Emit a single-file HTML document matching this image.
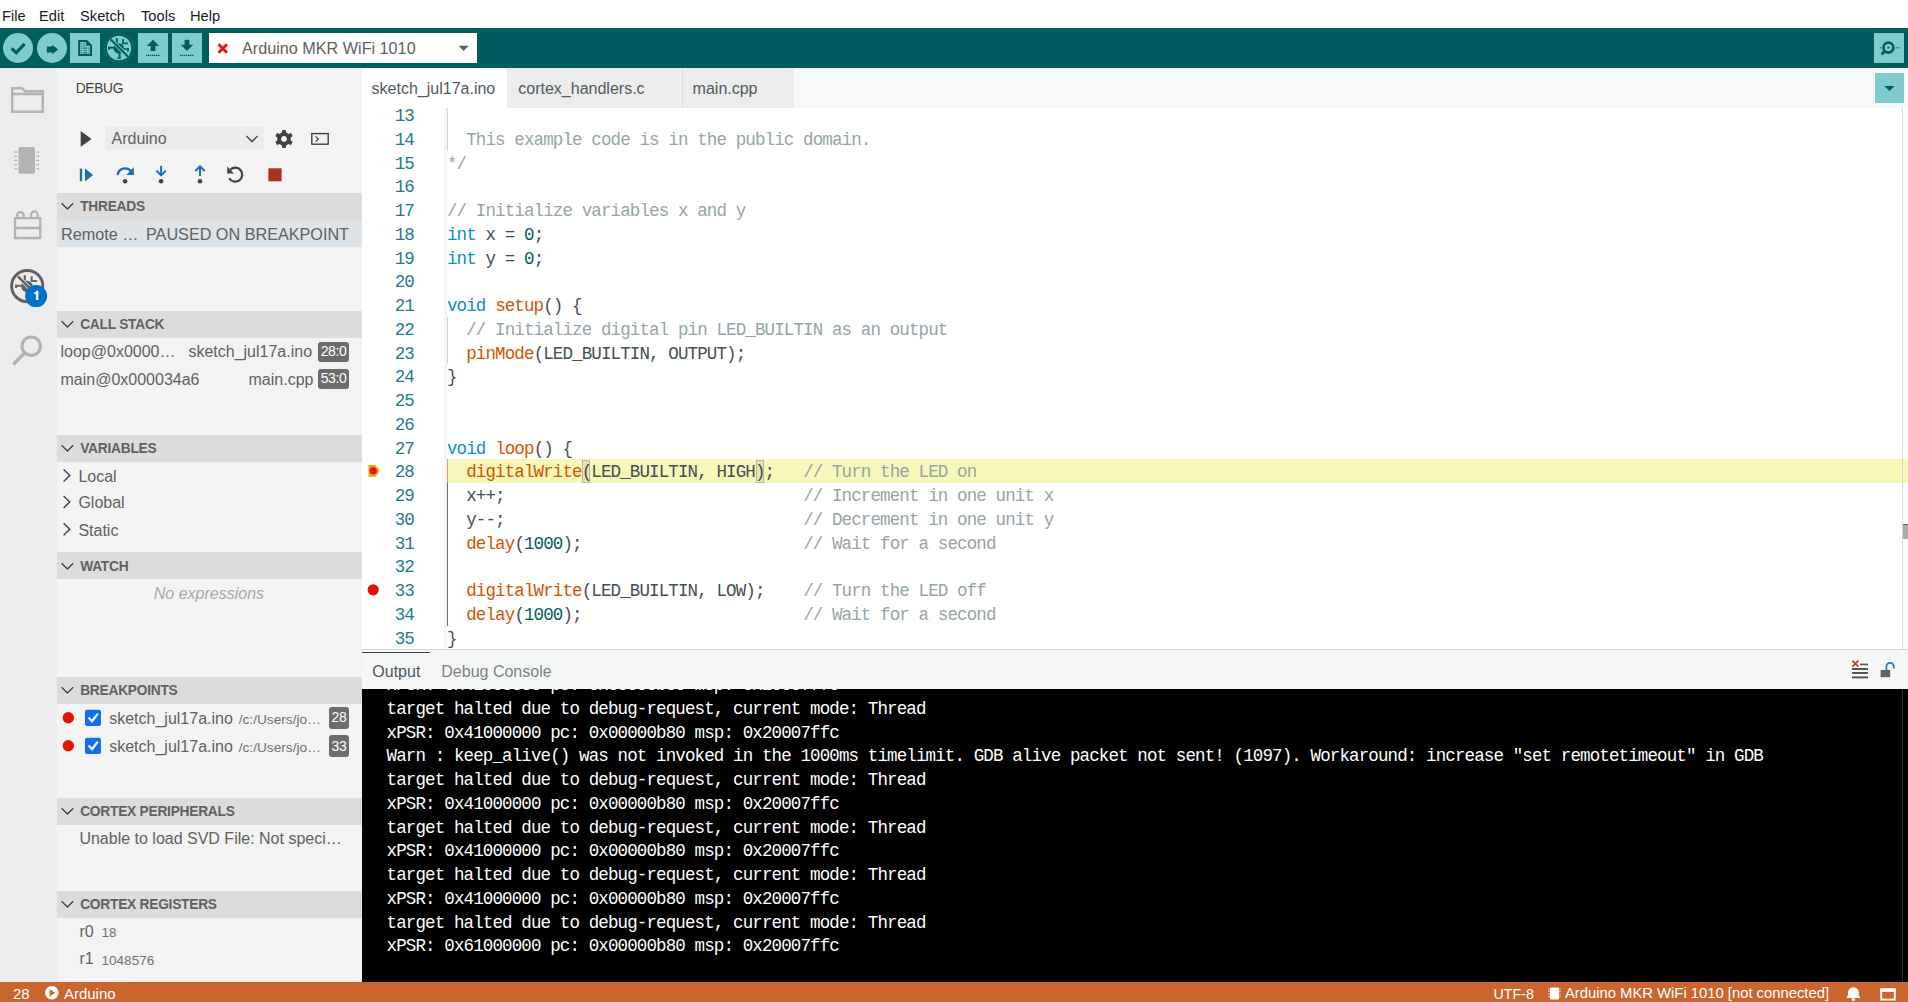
<!DOCTYPE html>
<html><head><meta charset="utf-8">
<style>
*{box-sizing:border-box;margin:0;padding:0}
html,body{width:1908px;height:1002px;overflow:hidden;background:#fff;font-family:"Liberation Sans",sans-serif;}
.a{position:absolute;white-space:pre}
#menu{left:0;top:0;width:1908px;height:28px;background:#fff;font-size:14.7px;color:#1a1a1a}
#toolbar{left:0;top:28px;width:1908px;height:40px;background:#005c5f}
.btn{position:absolute;top:5px;width:30px;height:30px;background:#7fcbcd}
.circ{border-radius:50%}
#act{left:0;top:68px;width:57px;height:914px;background:#ececec}
#side{left:57px;top:68px;width:305px;height:914px;background:#f3f3f3;color:#616161}
.hdr{position:absolute;left:0;width:305px;height:26.6px;background:#dcdcdc;font-weight:bold;font-size:13.75px;letter-spacing:-0.25px;color:#616161}
.hdr span{position:absolute;left:23.2px;top:6.2px}
.badge{position:absolute;background:#6b6d6d;color:#fff;border-radius:3px;font-size:14px;letter-spacing:-0.4px;text-align:center}
.hdr svg{position:absolute;left:4px;top:9px}
#tabs{left:362px;top:68px;width:1546px;height:40px;background:#f7f9f9;font-size:16px;color:#4e5b61}
#code{left:362px;top:108px;width:1546px;height:541px;background:#fff;overflow:hidden}
.ln{position:absolute;left:0;width:52px;line-height:23.75px;text-align:right;font-family:"Liberation Mono",monospace;font-size:17.5px;letter-spacing:-0.877px;color:#237893}
.cl{position:absolute;left:85px;line-height:23.75px;white-space:pre;font-family:"Liberation Mono",monospace;font-size:17.5px;letter-spacing:-0.877px;color:#434f54}
.k{color:#0b8dc6}.n{color:#005c5f}.f{color:#d35400}.c{color:#95a5a6}
#panel{left:362px;top:649px;width:1546px;height:40px;background:#f5f7f7;border-top:1px solid #d4d4d4}
#out{left:362px;top:689px;width:1546px;height:293px;background:#000;overflow:hidden}
.ol{position:absolute;left:24.6px;line-height:23.75px;white-space:pre;font-family:"Liberation Mono",monospace;font-size:17.5px;letter-spacing:-0.877px;color:#fff}
#status{left:0;top:982px;width:1908px;height:20px;background:#c9652f;color:#fff;font-size:15px;overflow:hidden}
</style></head>
<body>
<div id="menu" class="a">
 <span class="a" style="left:2px;top:8px">File</span>
 <span class="a" style="left:39px;top:8px">Edit</span>
 <span class="a" style="left:80px;top:8px">Sketch</span>
 <span class="a" style="left:141px;top:8px">Tools</span>
 <span class="a" style="left:190px;top:8px">Help</span>
</div>
<div id="toolbar" class="a">
 <svg class="a" style="left:0;top:0" width="480" height="40" viewBox="0 28 480 40">
  <circle cx="18" cy="48" r="15" fill="#7fcbcd"/>
  <path d="M11.6 48.3 L16.2 52.8 L24.6 43.8" fill="none" stroke="#005c5f" stroke-width="3.2"/>
  <circle cx="52" cy="48" r="15" fill="#7fcbcd"/>
  <path d="M46.8 46.6 H52.2 V44.8 L58.2 49.5 L52.2 54.2 V52.4 H46.8 Z" fill="#005c5f"/>
  <rect x="70" y="33" width="30" height="30" fill="#7fcbcd"/>
  <path d="M79.2 41 H86.6 L91 45.4 V55 H79.2 Z" fill="none" stroke="#005c5f" stroke-width="2"/>
  <path d="M86.2 40 L92 45.8 H86.2 Z" fill="#005c5f"/>
  <g fill="#2c7f93"><rect x="81.2" y="43" width="1" height="1.2"/><rect x="83.2" y="43" width="2" height="1"/><rect x="81.2" y="45.2" width="1" height="1.2"/><rect x="83.2" y="45.2" width="2" height="1"/><rect x="81.2" y="47.4" width="1" height="1.6"/><rect x="83.2" y="47.4" width="4" height="1.6"/><rect x="88.2" y="47.4" width="1" height="1.6"/><rect x="81.2" y="50" width="1" height="1"/><rect x="83.2" y="50" width="4" height="1"/><rect x="88.2" y="50" width="1" height="1"/><rect x="81.2" y="52" width="1" height="1.6"/><rect x="83.2" y="52" width="4" height="1.6"/><rect x="88.2" y="52" width="1" height="1.6"/></g>
  <circle cx="119" cy="48" r="14.5" fill="none" stroke="#2b7a85" stroke-width="0.8" stroke-dasharray="2 1.6"/>
  <circle cx="119" cy="48" r="12.2" fill="#7fcbcd"/>
  <g fill="#005c5f">
   <rect x="115.8" y="38.2" width="2" height="5"/>
   <rect x="122.2" y="39" width="1.8" height="4.4"/>
   <rect x="122.2" y="42.6" width="5.8" height="1.6"/>
   <rect x="108" y="46.8" width="6.2" height="1.8"/>
   <rect x="108" y="46.8" width="1.8" height="3"/>
   <rect x="118.6" y="53" width="2" height="5.8"/>
   <rect x="117.2" y="57.4" width="3.4" height="1.4"/>
   <rect x="123.4" y="48.2" width="5.4" height="1.6"/>
   <rect x="127" y="48.2" width="1.8" height="3.4"/>
   <circle cx="118.8" cy="48.4" r="5.2"/>
  </g>
  <path d="M110.5 39.2 L128.2 56.8" stroke="#7fcbcd" stroke-width="4"/>
  <path d="M110.5 39.2 L128.2 56.8" stroke="#005c5f" stroke-width="2.2"/>
  <rect x="138" y="33" width="30" height="30" fill="#7fcbcd"/>
  <path d="M153 39.7 L159.2 46 H155.4 V51 H150.6 V46 H146.8 Z" fill="#005c5f"/>
  <path d="M146 55.4 H160" stroke="#005c5f" stroke-width="1.2" stroke-dasharray="1.4 0.6"/>
  <rect x="172" y="33" width="30" height="30" fill="#7fcbcd"/>
  <path d="M184.6 39.7 H189.4 V44.7 H193.2 L187 51 L180.8 44.7 H184.6 Z" fill="#005c5f"/>
  <path d="M180 55.4 H194" stroke="#005c5f" stroke-width="1.2" stroke-dasharray="1.4 0.6"/>
  <rect x="209" y="33" width="268" height="30" fill="#fff"/>
  <path d="M218.6 44.2 L227 52.8 M227 44.2 L218.6 52.8" stroke="#e8100c" stroke-width="2.8"/>
  <path d="M458.6 45.8 H468.6 L463.6 51 Z" fill="#616161"/>
 </svg>
 <span class="a" style="left:242px;top:11.3px;font-size:16.2px;color:#616161">Arduino MKR WiFi 1010</span>
 <svg class="a" style="left:1874px;top:5px" width="30" height="30" viewBox="1874 33 30 30">
  <rect x="1874" y="33" width="30" height="30" fill="#7fcbcd"/>
  <circle cx="1888.4" cy="47.6" r="5" fill="none" stroke="#005c5f" stroke-width="2.6"/>
  <rect x="1887.4" y="46.6" width="2" height="2" fill="#005c5f"/>
  <path d="M1884.6 51.2 L1881.6 54.4" stroke="#005c5f" stroke-width="2.8"/>
  <g fill="#005c5f"><rect x="1879.8" y="47" width="1" height="1.4"/><rect x="1895.8" y="47" width="1" height="1.4"/><rect x="1898.2" y="47" width="1" height="1.4"/></g>
 </svg>
</div>
<div id="act" class="a">
 <svg class="a" style="left:0;top:0" width="57" height="320" viewBox="0 68 57 320">
  <path d="M12.2 111.8 V88.2 H22 L25 91.2 H42.8 V111.8 Z M12.2 94 H42.8" fill="none" stroke="#b3b3b3" stroke-width="2.4"/>
  <rect x="18.5" y="147.1" width="16.5" height="26.6" rx="1.6" fill="#b3b3b3"/>
  <g fill="#b3b3b3"><rect x="14.3" y="151.4" width="3" height="1.3"/><rect x="14.3" y="155.6" width="3" height="1.3"/><rect x="14.3" y="159.8" width="3" height="1.3"/><rect x="14.3" y="164" width="3" height="1.3"/><rect x="14.3" y="168.2" width="3" height="1.3"/>
  <rect x="36.2" y="151.4" width="3" height="1.3"/><rect x="36.2" y="155.6" width="3" height="1.3"/><rect x="36.2" y="159.8" width="3" height="1.3"/><rect x="36.2" y="164" width="3" height="1.3"/><rect x="36.2" y="168.2" width="3" height="1.3"/></g>
  <path d="M15 238 V218.1 H40.2 V238 Z M15 228 H40.2" fill="none" stroke="#b3b3b3" stroke-width="2.3"/>
  <path d="M17.3 218 V214.6 A3.3 3.3 0 0 1 23.7 214.6 V218 M31.1 218 V214.6 A3.3 3.3 0 0 1 37.7 214.6 V218" fill="none" stroke="#b3b3b3" stroke-width="2.2"/>
  <circle cx="27.2" cy="286.1" r="15.6" fill="none" stroke="#616161" stroke-width="2.9"/>
  <g transform="translate(27.2 286.1) scale(1.1) translate(-119 -48)">
  <g fill="#616161">
   <rect x="115.8" y="38.2" width="2" height="5"/>
   <rect x="122.2" y="39" width="1.8" height="4.4"/>
   <rect x="122.2" y="42.6" width="5.8" height="1.6"/>
   <rect x="108" y="46.8" width="6.2" height="1.8"/>
   <rect x="108" y="46.8" width="1.8" height="3"/>
   <rect x="118.6" y="53" width="2" height="5.8"/>
   <rect x="123.4" y="48.2" width="5.4" height="1.6"/>
   <rect x="127" y="48.2" width="1.8" height="3.4"/>
   <circle cx="118.8" cy="48.4" r="5.2"/>
  </g>
  <path d="M110.5 39.2 L128.2 56.8" stroke="#ececec" stroke-width="3.6"/>
  <path d="M110.5 39.2 L128.2 56.8" stroke="#616161" stroke-width="2.2"/>
  </g>
  <circle cx="36.1" cy="296.1" r="11" fill="#0070c9"/>
  <path d="M33.6 293.4 L37 290.8 H38.4 V300 H35.9 V294.2 Z" fill="#fff"/>
  <circle cx="31.2" cy="346.2" r="9.2" fill="none" stroke="#b3b3b3" stroke-width="3.1"/>
  <path d="M24.6 353 L14.4 363.2" stroke="#b3b3b3" stroke-width="3.6" stroke-linecap="round"/>
 </svg>
</div>
<div id="side" class="a">
 <span class="a" style="left:18.7px;top:13.3px;font-size:13.75px;letter-spacing:-0.3px;color:#424242">DEBUG</span>
 <svg class="a" style="left:0;top:0" width="305" height="130" viewBox="57 68 305 130">
  <path d="M80.7 131.1 L91.6 139 L80.7 146.8 Z" fill="#424242"/>
  <rect x="105" y="127" width="158.7" height="22.8" fill="#ebebeb"/>
  <path d="M246.4 136 L252 141.6 L257.6 136" fill="none" stroke="#555" stroke-width="1.6"/>
  <g transform="translate(284 139)">
   <path d="M-1.6 -9 h3.2 l0.6 2.6 a6.8 6.8 0 0 1 2.2 1.3 l2.6 -0.8 l1.6 2.8 l-2 1.8 a6.8 6.8 0 0 1 0 2.6 l2 1.8 l-1.6 2.8 l-2.6 -0.8 a6.8 6.8 0 0 1 -2.2 1.3 l-0.6 2.6 h-3.2 l-0.6 -2.6 a6.8 6.8 0 0 1 -2.2 -1.3 l-2.6 0.8 l-1.6 -2.8 l2 -1.8 a6.8 6.8 0 0 1 0 -2.6 l-2 -1.8 l1.6 -2.8 l2.6 0.8 a6.8 6.8 0 0 1 2.2 -1.3 z M0 -2.9 a2.9 2.9 0 1 0 0.01 0 z" fill="#424242" fill-rule="evenodd"/>
  </g>
  <rect x="311.8" y="133.6" width="16.4" height="10.6" fill="none" stroke="#424242" stroke-width="1.4"/>
  <path d="M315.6 136.4 L318.4 139 L315.6 141.6" fill="none" stroke="#424242" stroke-width="1.2"/>
  <rect x="79.8" y="168.6" width="2.3" height="12.7" fill="#1c6cb7"/>
  <path d="M85 168.6 L93.1 175 L85 181.4 Z" fill="#1c6cb7"/>
  <path d="M117.6 175 A7.6 7.6 0 0 1 131.2 171.4" fill="none" stroke="#1c6cb7" stroke-width="2.3"/>
  <path d="M133.9 167.1 V174.9 H126.2 Z" fill="#1c6cb7"/>
  <circle cx="125.1" cy="181.3" r="2.3" fill="#424242"/>
  <path d="M161.1 165.8 V175" stroke="#1c6cb7" stroke-width="2"/>
  <path d="M156.4 170.6 L161.1 175.4 L165.8 170.6" fill="none" stroke="#1c6cb7" stroke-width="2"/>
  <circle cx="161.1" cy="181.3" r="2.3" fill="#424242"/>
  <path d="M200 166.4 V176" stroke="#1c6cb7" stroke-width="2"/>
  <path d="M195.3 171 L200 166.3 L204.7 171" fill="none" stroke="#1c6cb7" stroke-width="2"/>
  <circle cx="200" cy="181.3" r="2.3" fill="#424242"/>
  <path d="M230.4 169.6 A7 7 0 1 1 229.2 178.2" fill="none" stroke="#424242" stroke-width="2.2"/>
  <path d="M227.2 166.6 V173.4 H234 Z" fill="#424242"/>
  <rect x="268.4" y="168.3" width="13.2" height="13" fill="#a93321"/>
 </svg>
 <span class="a" style="left:54.5px;top:61.5px;font-size:16px;color:#616161">Arduino</span>
 <div class="hdr" style="top:125px"><svg class="a" style="left:4px;top:9.2px" width="14" height="9" viewBox="0 0 14 9"><path d="M0.6 1.2 L6.4 7 L12.2 1.2" fill="none" stroke="#424242" stroke-width="1.4"/></svg><span>THREADS</span></div>
 <div class="a" style="left:0;top:152px;width:305px;height:26.8px;background:#dde3e6"></div>
 <span class="a" style="left:4px;top:156.9px;font-size:16.2px;color:#616161">Remote …</span>
 <span class="a" style="left:89px;top:156.9px;font-size:16.2px;color:#616161">PAUSED ON BREAKPOINT</span>
 <div class="hdr" style="top:243px"><svg class="a" style="left:4px;top:9.2px" width="14" height="9" viewBox="0 0 14 9"><path d="M0.6 1.2 L6.4 7 L12.2 1.2" fill="none" stroke="#424242" stroke-width="1.4"/></svg><span>CALL STACK</span></div>
 <span class="a" style="left:3.5px;top:275.2px;font-size:16px;color:#616161">loop@0x0000…</span>
 <span class="a" style="left:131.4px;top:275.2px;font-size:16px;color:#616161">sketch_jul17a.ino</span>
 <div class="badge" style="left:261px;top:274px;width:31px;height:19.7px;line-height:19.7px">28:0</div>
 <span class="a" style="left:3.5px;top:302.5px;font-size:16px;color:#616161">main@0x000034a6</span>
 <span class="a" style="left:191.5px;top:302.5px;font-size:16px;color:#616161">main.cpp</span>
 <div class="badge" style="left:261px;top:301px;width:31px;height:19.9px;line-height:19.9px">53:0</div>
 <div class="hdr" style="top:367.3px"><svg class="a" style="left:4px;top:9.2px" width="14" height="9" viewBox="0 0 14 9"><path d="M0.6 1.2 L6.4 7 L12.2 1.2" fill="none" stroke="#424242" stroke-width="1.4"/></svg><span>VARIABLES</span></div>
 <svg class="a" style="left:0;top:395px" width="20" height="80" viewBox="57 463 20 80">
  <path d="M63.6 469.4 L69.8 475.4 L63.6 481.4 M63.6 496 L69.8 502 L63.6 508 M63.6 523.2 L69.8 529.2 L63.6 535.2" fill="none" stroke="#424242" stroke-width="1.4"/>
 </svg>
 <span class="a" style="left:21.4px;top:399.7px;font-size:16px;color:#616161">Local</span>
 <span class="a" style="left:21.4px;top:426.3px;font-size:16px;color:#616161">Global</span>
 <span class="a" style="left:21.4px;top:453.5px;font-size:16px;color:#616161">Static</span>
 <div class="hdr" style="top:484.4px"><svg class="a" style="left:4px;top:9.2px" width="14" height="9" viewBox="0 0 14 9"><path d="M0.6 1.2 L6.4 7 L12.2 1.2" fill="none" stroke="#424242" stroke-width="1.4"/></svg><span>WATCH</span></div>
 <span class="a" style="left:96.8px;top:517.0px;font-size:16px;font-style:italic;color:#a8a8a8">No expressions</span>
 <div class="hdr" style="top:609.2px"><svg class="a" style="left:4px;top:9.2px" width="14" height="9" viewBox="0 0 14 9"><path d="M0.6 1.2 L6.4 7 L12.2 1.2" fill="none" stroke="#424242" stroke-width="1.4"/></svg><span>BREAKPOINTS</span></div>
 <svg class="a" style="left:0;top:636px" width="50" height="60" viewBox="57 704 50 60">
  <circle cx="68.3" cy="717.8" r="5.7" fill="#e51400"/>
  <circle cx="68.3" cy="745.8" r="5.7" fill="#e51400"/>
  <rect x="85" y="709.8" width="16" height="16.2" rx="2" fill="#0f6ef5"/>
  <path d="M88.6 717.6 L92 721.2 L97.8 713.6" fill="none" stroke="#fff" stroke-width="2.2"/>
  <rect x="85" y="737.8" width="16" height="16.2" rx="2" fill="#0f6ef5"/>
  <path d="M88.6 745.6 L92 749.2 L97.8 741.6" fill="none" stroke="#fff" stroke-width="2.2"/>
 </svg>
 <span class="a" style="left:52.2px;top:641.6px;font-size:16px;color:#616161">sketch_jul17a.ino</span>
 <span class="a" style="left:181.7px;top:643.6px;font-size:13.7px;color:#717171">/c:/Users/jo…</span>
 <div class="badge" style="left:272.2px;top:639.4px;width:19.5px;height:21.4px;line-height:21.4px">28</div>
 <span class="a" style="left:52.2px;top:669.6px;font-size:16px;color:#616161">sketch_jul17a.ino</span>
 <span class="a" style="left:181.7px;top:671.6px;font-size:13.7px;color:#717171">/c:/Users/jo…</span>
 <div class="badge" style="left:272.2px;top:667px;width:19.5px;height:22px;line-height:22px">33</div>
 <div class="hdr" style="top:730px"><svg class="a" style="left:4px;top:9.2px" width="14" height="9" viewBox="0 0 14 9"><path d="M0.6 1.2 L6.4 7 L12.2 1.2" fill="none" stroke="#424242" stroke-width="1.4"/></svg><span>CORTEX PERIPHERALS</span></div>
 <span class="a" style="left:22.4px;top:762.1px;font-size:16px;color:#616161">Unable to load SVD File: Not speci…</span>
 <div class="hdr" style="top:823.2px"><svg class="a" style="left:4px;top:9.2px" width="14" height="9" viewBox="0 0 14 9"><path d="M0.6 1.2 L6.4 7 L12.2 1.2" fill="none" stroke="#424242" stroke-width="1.4"/></svg><span>CORTEX REGISTERS</span></div>
 <span class="a" style="left:22.4px;top:855.1px;font-size:16px;color:#616161">r0</span>
 <span class="a" style="left:44.6px;top:857.4px;font-size:13.5px;color:#717171">18</span>
 <span class="a" style="left:22.4px;top:882.2px;font-size:16px;color:#616161">r1</span>
 <span class="a" style="left:44.6px;top:884.5px;font-size:13.5px;color:#717171">1048576</span>
</div>
<div id="tabs" class="a">
 <div class="a" style="left:0;top:0;width:145px;height:40px;background:#fff"></div>
 <div class="a" style="left:145px;top:0;width:175px;height:40px;background:#ececec"></div>
 <div class="a" style="left:320px;top:0;width:1px;height:40px;background:#dcdcdc"></div>
 <div class="a" style="left:321px;top:0;width:111px;height:40px;background:#ececec"></div>
 <span class="a" style="left:9.6px;top:12.2px">sketch_jul17a.ino</span>
 <span class="a" style="left:156.3px;top:12.2px">cortex_handlers.c</span>
 <span class="a" style="left:330.6px;top:12.2px">main.cpp</span>
 <svg class="a" style="left:1513px;top:5px" width="29" height="30" viewBox="0 0 29 30"><rect width="29" height="30" fill="#7fcbcd"/><path d="M9.4 13 H19.6 L14.5 18 Z" fill="#005c5f"/></svg>
</div>
<div id="code" class="a">
<div class="a" style="left:81.5px;top:0;width:3.5px;height:541px;background:#f4f4f4"></div>
<div class="a" style="left:85px;top:351.25px;width:1461px;height:23.75px;background:#f8f7ba"></div>
<div class="a" style="left:85px;top:-5.00px;width:1px;height:47.5px;background:#d3d3d3"></div>
<div class="a" style="left:85px;top:208.75px;width:1px;height:47.5px;background:#d3d3d3"></div>
<div class="a" style="left:85px;top:351.25px;width:1px;height:23.75px;background:#e0a060"></div>
<div class="a" style="left:85px;top:375.00px;width:1.2px;height:142.50px;background:#6e6e6e"></div>
<div class="a" style="left:220.3px;top:351.75px;width:8px;height:22.75px;background:#e8e6a8;border:1px solid #b9b9a0"></div>
<div class="a" style="left:393.5px;top:351.75px;width:8px;height:22.75px;background:#e8e6a8;border:1px solid #b9b9a0"></div>
<div class="a" style="left:1540px;top:0;width:1px;height:541px;background:#d8d8d8"></div>
<div class="a" style="left:1541px;top:351.25px;width:5px;height:23.75px;background:#f8f7ba"></div>
<div class="a" style="left:1541px;top:416.4px;width:5px;height:15px;background:#a8acac;border-top:1.5px solid #6a6a6a"></div>
<svg class="a" style="left:0;top:0" width="30" height="541" viewBox="362 108 30 541">
 <path d="M368.5 465 H375.6 L379.6 470.8 L375.6 476.7 H368.5 Z" fill="#eca404"/>
 <circle cx="373.2" cy="470.8" r="3.6" fill="#e51400"/>
 <circle cx="373.2" cy="589.8" r="5.6" fill="#e51400"/>
</svg>
<div class="ln" style="top:-2.94px">13</div>
<div class="ln" style="top:20.81px">14</div>
<div class="cl" style="top:20.81px"><span class="c">  This example code is in the public domain.</span></div>
<div class="ln" style="top:44.56px">15</div>
<div class="cl" style="top:44.56px"><span class="c">*/</span></div>
<div class="ln" style="top:68.31px">16</div>
<div class="ln" style="top:92.06px">17</div>
<div class="cl" style="top:92.06px"><span class="c">// Initialize variables x and y</span></div>
<div class="ln" style="top:115.81px">18</div>
<div class="cl" style="top:115.81px"><span class="k">int</span> x = <span class="n">0</span>;</div>
<div class="ln" style="top:139.56px">19</div>
<div class="cl" style="top:139.56px"><span class="k">int</span> y = <span class="n">0</span>;</div>
<div class="ln" style="top:163.31px">20</div>
<div class="ln" style="top:187.06px">21</div>
<div class="cl" style="top:187.06px"><span class="k">void</span> <span class="f">setup</span>() {</div>
<div class="ln" style="top:210.81px">22</div>
<div class="cl" style="top:210.81px">  <span class="c">// Initialize digital pin LED_BUILTIN as an output</span></div>
<div class="ln" style="top:234.56px">23</div>
<div class="cl" style="top:234.56px">  <span class="f">pinMode</span>(LED_BUILTIN, OUTPUT);</div>
<div class="ln" style="top:258.31px">24</div>
<div class="cl" style="top:258.31px">}</div>
<div class="ln" style="top:282.06px">25</div>
<div class="ln" style="top:305.81px">26</div>
<div class="ln" style="top:329.56px">27</div>
<div class="cl" style="top:329.56px"><span class="k">void</span> <span class="f">loop</span>() {</div>
<div class="ln" style="top:353.31px">28</div>
<div class="cl" style="top:353.31px">  <span class="f">digitalWrite</span>(LED_BUILTIN, HIGH);   <span class="c">// Turn the LED on</span></div>
<div class="ln" style="top:377.06px">29</div>
<div class="cl" style="top:377.06px">  x++;                               <span class="c">// Increment in one unit x</span></div>
<div class="ln" style="top:400.81px">30</div>
<div class="cl" style="top:400.81px">  y--;                               <span class="c">// Decrement in one unit y</span></div>
<div class="ln" style="top:424.56px">31</div>
<div class="cl" style="top:424.56px">  <span class="f">delay</span>(<span class="n">1000</span>);                       <span class="c">// Wait for a second</span></div>
<div class="ln" style="top:448.31px">32</div>
<div class="ln" style="top:472.06px">33</div>
<div class="cl" style="top:472.06px">  <span class="f">digitalWrite</span>(LED_BUILTIN, LOW);    <span class="c">// Turn the LED off</span></div>
<div class="ln" style="top:495.81px">34</div>
<div class="cl" style="top:495.81px">  <span class="f">delay</span>(<span class="n">1000</span>);                       <span class="c">// Wait for a second</span></div>
<div class="ln" style="top:519.56px">35</div>
<div class="cl" style="top:519.56px">}</div>
</div>
<div id="panel" class="a">
 <div class="a" style="left:0;top:1.5px;width:68px;height:1.2px;background:#424242"></div>
 <span class="a" style="left:10.3px;top:13.1px;font-size:16px;color:#4e5757">Output</span>
 <span class="a" style="left:79.3px;top:13.1px;font-size:16px;color:#7b8585">Debug Console</span>
 <svg class="a" style="left:1480px;top:0" width="66" height="40" viewBox="1842 649 66 40">
  <g fill="#555"><rect x="1852" y="667" width="16" height="2"/><rect x="1852" y="671" width="16" height="2"/><rect x="1852" y="675.4" width="16" height="2"/><rect x="1860" y="662.6" width="8" height="1.6"/></g>
  <path d="M1852.4 659.6 L1858.4 665.6 M1858.4 659.6 L1852.4 665.6" stroke="#c0392b" stroke-width="1.6"/>
  <rect x="1880.6" y="669" width="9.6" height="7.2" fill="#616161"/>
  <path d="M1886.4 669 V665.6 A3.7 3.7 0 0 1 1893.8 665.6 V667.6" fill="none" stroke="#2a7ab0" stroke-width="1.8"/>
 </svg>
</div>
<div id="out" class="a">
<div class="a" style="left:1539.5px;top:0;width:1px;height:293px;background:#333"></div>
<div class="ol" style="top:-14.79px">xPSR: 0x41000000 pc: 0x00000b80 msp: 0x20007ffc</div>
<div class="ol" style="top:8.96px">target halted due to debug-request, current mode: Thread</div>
<div class="ol" style="top:32.71px">xPSR: 0x41000000 pc: 0x00000b80 msp: 0x20007ffc</div>
<div class="ol" style="top:56.46px">Warn : keep_alive() was not invoked in the 1000ms timelimit. GDB alive packet not sent! (1097). Workaround: increase &quot;set remotetimeout&quot; in GDB</div>
<div class="ol" style="top:80.21px">target halted due to debug-request, current mode: Thread</div>
<div class="ol" style="top:103.96px">xPSR: 0x41000000 pc: 0x00000b80 msp: 0x20007ffc</div>
<div class="ol" style="top:127.71px">target halted due to debug-request, current mode: Thread</div>
<div class="ol" style="top:151.46px">xPSR: 0x41000000 pc: 0x00000b80 msp: 0x20007ffc</div>
<div class="ol" style="top:175.21px">target halted due to debug-request, current mode: Thread</div>
<div class="ol" style="top:198.96px">xPSR: 0x41000000 pc: 0x00000b80 msp: 0x20007ffc</div>
<div class="ol" style="top:222.71px">target halted due to debug-request, current mode: Thread</div>
<div class="ol" style="top:246.46px">xPSR: 0x61000000 pc: 0x00000b80 msp: 0x20007ffc</div>
</div>
<div id="status" class="a">
 <span class="a" style="left:13px;top:3.2px;font-size:15px">28</span>
 <svg class="a" style="left:44px;top:3px" width="16" height="16" viewBox="0 0 16 16"><circle cx="7.8" cy="7.8" r="6.8" fill="#fff"/><path d="M5.6 4.2 L11.2 7.8 L5.6 11.4 Z" fill="#c9652f"/></svg>
 <span class="a" style="left:63.9px;top:3.2px;font-size:15px">Arduino</span>
 <span class="a" style="left:1493.6px;top:4.3px;font-size:14.2px">UTF-8</span>
 <svg class="a" style="left:1548px;top:5px" width="14" height="13" viewBox="0 0 14 13"><rect x="2" y="0.4" width="9" height="12" rx="1" fill="#fff"/><g fill="#fff"><rect x="0.4" y="1.5" width="1.2" height="1"/><rect x="0.4" y="4" width="1.2" height="1"/><rect x="0.4" y="6.5" width="1.2" height="1"/><rect x="0.4" y="9" width="1.2" height="1"/><rect x="11.4" y="1.5" width="1.2" height="1"/><rect x="11.4" y="4" width="1.2" height="1"/><rect x="11.4" y="6.5" width="1.2" height="1"/><rect x="11.4" y="9" width="1.2" height="1"/></g></svg>
 <span class="a" style="left:1565px;top:3.2px;font-size:14.8px">Arduino MKR WiFi 1010 [not connected]</span>
 <svg class="a" style="left:1845px;top:5px" width="17" height="14" viewBox="0 0 17 14"><path d="M1.2 11 C3 9.6 3 8 3 5.6 A5.4 5.4 0 0 1 13.8 5.6 C13.8 8 13.8 9.6 15.6 11 Z" fill="#fff"/><circle cx="8.4" cy="12.4" r="1.6" fill="#fff"/></svg>
 <svg class="a" style="left:1879px;top:5px" width="18" height="14" viewBox="0 0 18 14"><rect x="2.2" y="2.2" width="13.6" height="10.4" fill="none" stroke="#fff" stroke-width="1.8"/><rect x="1.4" y="1.4" width="15.2" height="3.4" fill="#fff"/></svg>
</div>
</body></html>
